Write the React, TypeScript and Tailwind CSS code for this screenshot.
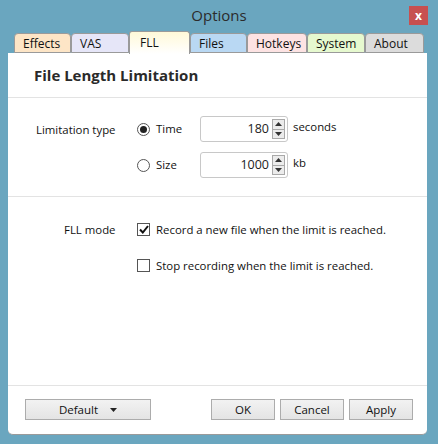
import { useState } from "react";

const tabs = [
  { name: "Effects", w: "w-[57px]", bg: "bg-[#fde5c6]" },
  { name: "VAS", w: "w-[58px]", bg: "bg-[#e6e6f8]" },
  { name: "FLL", w: "w-[61px]", bg: "bg-gradient-to-b from-[#fff9d8] to-white", active: true },
  { name: "Files", w: "w-[57px]", bg: "bg-[#b9d8f3]" },
  { name: "Hotkeys", w: "w-[60px]", bg: "bg-[#fde3e3]" },
  { name: "System", w: "w-[58px]", bg: "bg-[#e6f9cf]" },
  { name: "About", w: "w-[59px]", bg: "bg-[#dcdcdc]" },
];

function Spin({ value }: { value: string }) {
  return (
    <div className="flex h-[26px] w-[88px] items-center rounded-[3px] border border-[#c8c8c8] bg-white pr-[2px]">
      <div className="flex-1 pr-[3px] text-right text-[12.5px] text-[#222]">{value}</div>
      <div className="flex h-[20px] w-[13px] flex-col border border-[#a9a9a9] bg-[#ececec]">
        <div className="flex flex-1 items-center justify-center border-b border-[#a9a9a9]">
          <svg width="7" height="4" viewBox="0 0 7 4">
            <path d="M0 4 L3.5 0 L7 4Z" fill="#333" />
          </svg>
        </div>
        <div className="flex flex-1 items-center justify-center">
          <svg width="7" height="4" viewBox="0 0 7 4">
            <path d="M0 0 L3.5 4 L7 0Z" fill="#333" />
          </svg>
        </div>
      </div>
    </div>
  );
}

function Radio({ on }: { on?: boolean }) {
  return (
    <div className="flex h-[13px] w-[13px] items-center justify-center rounded-full border border-[#555] bg-white">
      {on && <div className="h-[7px] w-[7px] rounded-full bg-[#222]" />}
    </div>
  );
}

function Check({ on }: { on?: boolean }) {
  return (
    <div className="flex h-[13px] w-[13px] items-center justify-center border border-[#555] bg-white">
      {on && (
        <svg width="10" height="9" viewBox="0 0 10 9">
          <path d="M1 4.5 L3.8 7.5 L9 1" stroke="#111" strokeWidth="2" fill="none" />
        </svg>
      )}
    </div>
  );
}

function Btn({ children, w }: { children: React.ReactNode; w: string }) {
  return (
    <div
      className={`${w} flex h-[21px] items-center justify-center border border-[#acacac] bg-gradient-to-b from-[#f2f2f2] to-[#e4e4e4] text-[11.5px] text-[#111]`}
    >
      {children}
    </div>
  );
}

export default function App() {
  const [mode] = useState("time");
  return (
    <div
      className="flex h-[444px] w-[438px] flex-col bg-[#6aa6bf]"
      style={{ fontFamily: '"Open Sans", "Noto Sans", sans-serif' }}
    >
      {/* title bar */}
      <div className="relative flex h-[31px] items-center justify-center">
        <span className="text-[15px] text-[#2b2b2b]">Options</span>
        <div className="absolute right-[10px] top-[6px] flex h-[19px] w-[19px] items-center justify-center bg-[#c75050] text-[12px] font-bold leading-none text-white">
          x
        </div>
      </div>

      {/* tabs */}
      <div className="flex h-[22px] items-end pl-[14px]">
        {tabs.map((t) =>
          t.active ? (
            <div
              key={t.name}
              className={`${t.w} ${t.bg} relative z-10 -mb-px flex h-[23px] items-start rounded-t-[3px] border border-b-0 border-[#9a9a9a] pl-[10px] pt-[2px] text-[12px] text-[#111]`}
            >
              {t.name}
            </div>
          ) : (
            <div
              key={t.name}
              className={`${t.w} ${t.bg} flex h-[20px] items-center rounded-t-[4px] border border-[#9a9a9a] pl-[8px] pt-[1px] text-[12px] text-[#111]`}
            >
              {t.name}
            </div>
          )
        )}
      </div>

      {/* panel */}
      <div className="ml-[8px] flex h-[382px] w-[419px] flex-col rounded-b-[5px] border-b border-[#9a9a9a] bg-white">
        <div className="flex h-[45px] items-center border-b border-[#e3e3e3] pl-[26px] text-[15px] font-bold text-[#2a2a2a]">
          File Length Limitation
        </div>

        <div className="flex h-[99px] border-b border-[#e3e3e3] pt-[18px] text-[11.4px]">
          <div className="w-[129px] pl-[28px] pt-[5px] text-[#111]">Limitation type</div>
          <div className="flex flex-col gap-[10px]">
            <div className="flex items-center">
              <Radio on={mode === "time"} />
              <span className="ml-[6px] w-[44px] text-[#111]">Time</span>
              <Spin value="180" />
              <span className="ml-[5px] -mt-[4px] text-[#111]">seconds</span>
            </div>
            <div className="flex items-center">
              <Radio />
              <span className="ml-[6px] w-[44px] text-[#111]">Size</span>
              <Spin value="1000" />
              <span className="ml-[5px] -mt-[4px] text-[#111]">kb</span>
            </div>
          </div>
        </div>

        <div className="flex flex-1 border-b border-[#e3e3e3] pt-[24px] text-[11.4px]">
          <div className="w-[129px] pl-[56px] text-[#111]">FLL mode</div>
          <div className="flex flex-col gap-[19px]">
            <div className="flex items-center">
              <Check on />
              <span className="ml-[6px] text-[#111]">Record a new file when the limit is reached.</span>
            </div>
            <div className="flex items-center">
              <Check />
              <span className="ml-[6px] text-[#111]">Stop recording when the limit is reached.</span>
            </div>
          </div>
        </div>

        <div className="flex h-[48px] items-start pl-[17px] pt-[13px]">
          <Btn w="w-[126px]">
            <span>Default</span>
            <svg className="ml-[12px]" width="7" height="4" viewBox="0 0 7 4">
              <path d="M0 0 L3.5 4 L7 0Z" fill="#222" />
            </svg>
          </Btn>
          <div className="ml-[60px] flex gap-[5px]">
            <Btn w="w-[64px]">OK</Btn>
            <Btn w="w-[64px]">Cancel</Btn>
            <Btn w="w-[64px]">Apply</Btn>
          </div>
        </div>
      </div>
    </div>
  );
}
